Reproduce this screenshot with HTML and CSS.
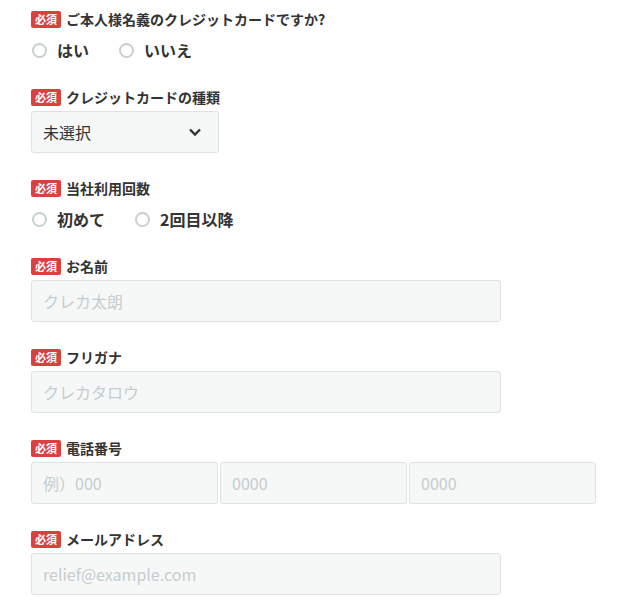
FILE: index.html
```html
<!DOCTYPE html>
<html lang="ja">
<head>
    <meta charset="UTF-8">
    <meta name="viewport" content="width=device-width, initial-scale=1.0">
    <title>お申し込みフォーム</title>
    <link rel="stylesheet" href="styles.css">
</head>
<body>
    <form class="form">
        <div class="field">
            <div class="field-label"><span class="required">必須</span>ご本人様名義のクレジットカードですか?</div>
            <div class="radios">
                <label class="radio"><input type="radio" name="meigi"><span class="mark"></span>はい</label>
                <label class="radio"><input type="radio" name="meigi"><span class="mark"></span>いいえ</label>
            </div>
        </div>
        <div class="field">
            <div class="field-label"><span class="required">必須</span>クレジットカードの種類</div>
            <div class="select">
                <span>未選択</span>
                <svg width="14" height="10" viewBox="0 0 14 10"><path d="M2 2.5 L7 7.5 L12 2.5" fill="none" stroke="#333" stroke-width="2.4"/></svg>
            </div>
        </div>
        <div class="field">
            <div class="field-label"><span class="required">必須</span>当社利用回数</div>
            <div class="radios">
                <label class="radio"><input type="radio" name="kaisu"><span class="mark"></span>初めて</label>
                <label class="radio"><input type="radio" name="kaisu"><span class="mark"></span>2回目以降</label>
            </div>
        </div>
        <div class="field">
            <div class="field-label"><span class="required">必須</span>お名前</div>
            <input class="text" type="text" placeholder="クレカ太朗">
        </div>
        <div class="field">
            <div class="field-label"><span class="required">必須</span>フリガナ</div>
            <input class="text" type="text" placeholder="クレカタロウ">
        </div>
        <div class="field">
            <div class="field-label"><span class="required">必須</span>電話番号</div>
            <div class="tel">
                <input class="text" type="text" placeholder="例）000">
                <input class="text" type="text" placeholder="0000">
                <input class="text" type="text" placeholder="0000">
            </div>
        </div>
        <div class="field">
            <div class="field-label"><span class="required">必須</span>メールアドレス</div>
            <input class="text" type="text" placeholder="relief@example.com">
        </div>
    </form>
</body>
</html>
```

FILE: styles.css
```css
body {
    margin: 0;
    padding: 9px 0 0 31px;
    background: #fff;
    color: #333;
    font-family: "Noto Sans CJK JP", "Noto Sans", sans-serif;
}
.field {
    margin-bottom: 25px;
}
.field-label {
    display: flex;
    align-items: center;
    height: 20px;
    font-size: 14px;
    font-weight: bold;
    color: #333;
}
.required {
    display: inline-block;
    width: 30px;
    height: 17px;
    line-height: 17px;
    margin-right: 5px;
    background: #d9413e;
    color: #fff;
    border-radius: 2px;
    font-size: 11px;
    text-align: center;
}
.radios {
    display: flex;
    gap: 29px;
    margin-top: 9px;
    height: 24px;
}
.radio {
    display: flex;
    align-items: center;
    font-size: 16px;
    font-weight: bold;
    color: #333;
}
.radio input {
    display: none;
}
.mark {
    width: 11px;
    height: 11px;
    border: 2px solid #c8d0d0;
    border-radius: 50%;
    margin: 0 10px 0 1px;
}
.select {
    display: flex;
    align-items: center;
    justify-content: space-between;
    box-sizing: border-box;
    width: 188px;
    height: 42px;
    margin-top: 4px;
    padding: 0 16px 0 11px;
    background: #f6f8f8;
    border: 1px solid #dde3e3;
    border-radius: 3px;
    font-size: 16px;
}
.text {
    display: block;
    box-sizing: border-box;
    width: 470px;
    height: 42px;
    margin: 4px 0 0;
    padding: 0 11px;
    background: #f6f8f8;
    border: 1px solid #dde3e3;
    border-radius: 3px;
    font-family: inherit;
    font-size: 16px;
    color: #333;
}
.text::placeholder {
    color: #c5cdcd;
}
.tel {
    display: flex;
    gap: 2px;
    margin-top: 4px;
}
.tel .text {
    width: 187px;
    margin: 0;
}
```
